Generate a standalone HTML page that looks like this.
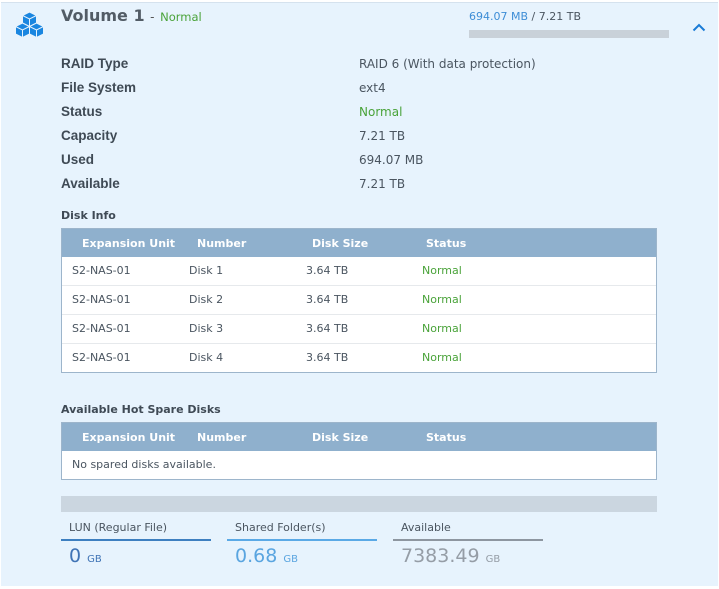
<!DOCTYPE html>
<html><head><meta charset="utf-8"><style>
*{margin:0;padding:0;box-sizing:border-box}
body{width:719px;height:589px;background:#fff;font-family:"DejaVu Sans","Liberation Sans",sans-serif;color:#4a5560;position:relative;overflow:hidden}
.panel{position:absolute;left:1px;top:2px;width:717px;height:584px;background:#e7f3fd;border-top:1px solid #d5e2ee}
.a{position:absolute;white-space:nowrap}
.lbl{font-weight:bold;color:#3f4a55;font-family:"Liberation Sans",sans-serif;font-size:13.5px}
.val{font-size:12px}
.g{color:#4aa33a}
.tbl{position:absolute;left:61px;width:596px;border:1px solid #9db5cb;background:#fff}
.th{height:28px;background:#8fb0cd;color:#fff;font-weight:bold;font-size:11px;position:relative}
.tr{height:29px;border-top:1px solid #e6e9ec;font-size:11px;position:relative;color:#4a5560}
.th+.tr{border-top:none;height:28px}
.th .c{top:8px}
.c{position:absolute;top:7px;white-space:nowrap}
</style></head><body>
<div class="panel"></div>
<svg class="a" style="left:12px;top:11px" width="35" height="32" viewBox="0 0 34 32">
<g fill="#1a86e0" stroke="#e7f3fd" stroke-width="1">
<path d="M17 1 L24 4.5 L24 12 L17 15.5 L10 12 L10 4.5Z"/>
<path d="M10 12 L17 15.5 L17 23 L10 26.5 L3 23 L3 15.5Z"/>
<path d="M24 12 L31 15.5 L31 23 L24 26.5 L17 23 L17 15.5Z"/>
</g>
<g stroke="#e7f3fd" stroke-width="1" fill="none">
<path d="M10 4.5 L17 8 L24 4.5 M17 8 V15.5"/>
<path d="M3 15.5 L10 19 L17 15.5 M10 19 V26.5"/>
<path d="M17 15.5 L24 19 L31 15.5 M24 19 V26.5"/>
</g></svg>
<div class="a" style="left:61px;top:6px;font-size:16px;font-weight:bold;color:#525c66;font-family:'DejaVu Sans',sans-serif">Volume 1 <span style="font-weight:normal;font-size:12px;color:#555">-</span> <span style="font-weight:normal;font-size:11.5px" class="g">Normal</span></div>
<div class="a" style="left:469px;top:10px;font-size:11px;color:#4a5560"><span style="color:#3d8dd6">694.07 MB</span> / 7.21 TB</div>
<div class="a" style="left:469px;top:30px;width:200px;height:8px;background:#c9d1d9"></div>
<svg class="a" style="left:692px;top:23px" width="14" height="9" viewBox="0 0 14 9"><path d="M1.5 7.5 L7 2 L12.5 7.5" stroke="#1a7bd6" stroke-width="2" fill="none"/></svg>

<div class="a lbl" style="left:61px;top:56px">RAID Type</div>
<div class="a lbl" style="left:61px;top:80px">File System</div>
<div class="a lbl" style="left:61px;top:104px">Status</div>
<div class="a lbl" style="left:61px;top:128px">Capacity</div>
<div class="a lbl" style="left:61px;top:152px">Used</div>
<div class="a lbl" style="left:61px;top:176px">Available</div>
<div class="a val" style="left:359px;top:57px">RAID 6 (With data protection)</div>
<div class="a val" style="left:359px;top:81px">ext4</div>
<div class="a val g" style="left:359px;top:105px">Normal</div>
<div class="a val" style="left:359px;top:129px">7.21 TB</div>
<div class="a val" style="left:359px;top:153px">694.07 MB</div>
<div class="a val" style="left:359px;top:177px">7.21 TB</div>

<div class="a" style="left:61px;top:209px;font-size:11px;font-weight:bold;color:#3f4a55">Disk Info</div>
<div class="tbl" style="top:228px">
<div class="th"><span class="c" style="left:20px">Expansion Unit</span><span class="c" style="left:135px">Number</span><span class="c" style="left:250px">Disk Size</span><span class="c" style="left:364px">Status</span></div>
<div class="tr"><span class="c" style="left:10px">S2-NAS-01</span><span class="c" style="left:127px">Disk 1</span><span class="c" style="left:244px">3.64 TB</span><span class="c g" style="left:360px">Normal</span></div>
<div class="tr"><span class="c" style="left:10px">S2-NAS-01</span><span class="c" style="left:127px">Disk 2</span><span class="c" style="left:244px">3.64 TB</span><span class="c g" style="left:360px">Normal</span></div>
<div class="tr"><span class="c" style="left:10px">S2-NAS-01</span><span class="c" style="left:127px">Disk 3</span><span class="c" style="left:244px">3.64 TB</span><span class="c g" style="left:360px">Normal</span></div>
<div class="tr"><span class="c" style="left:10px">S2-NAS-01</span><span class="c" style="left:127px">Disk 4</span><span class="c" style="left:244px">3.64 TB</span><span class="c g" style="left:360px">Normal</span></div>
</div>

<div class="a" style="left:61px;top:403px;font-size:11px;font-weight:bold;color:#3f4a55">Available Hot Spare Disks</div>
<div class="tbl" style="top:422px">
<div class="th"><span class="c" style="left:20px">Expansion Unit</span><span class="c" style="left:135px">Number</span><span class="c" style="left:250px">Disk Size</span><span class="c" style="left:364px">Status</span></div>
<div class="tr"><span class="c" style="left:10px">No spared disks available.</span></div>
</div>

<div class="a" style="left:61px;top:496px;width:596px;height:16px;background:#cbd6e0"></div>
<div class="a" style="left:69px;top:521px;font-size:11px">LUN (Regular File)</div>
<div class="a" style="left:235px;top:521px;font-size:11px">Shared Folder(s)</div>
<div class="a" style="left:401px;top:521px;font-size:11px">Available</div>
<div class="a" style="left:61px;top:539px;width:150px;height:2px;background:#3d7fc0"></div>
<div class="a" style="left:227px;top:539px;width:150px;height:2px;background:#5aa9e6"></div>
<div class="a" style="left:393px;top:539px;width:150px;height:2px;background:#8d96a0"></div>
<div class="a" style="left:69px;top:545px;font-size:19px;color:#3f73b5">0 <span style="font-size:10px">GB</span></div>
<div class="a" style="left:235px;top:545px;font-size:19px;color:#5aa5e0">0.68 <span style="font-size:10px">GB</span></div>
<div class="a" style="left:401px;top:545px;font-size:19px;color:#959da6">7383.49 <span style="font-size:10px">GB</span></div>
</body></html>
